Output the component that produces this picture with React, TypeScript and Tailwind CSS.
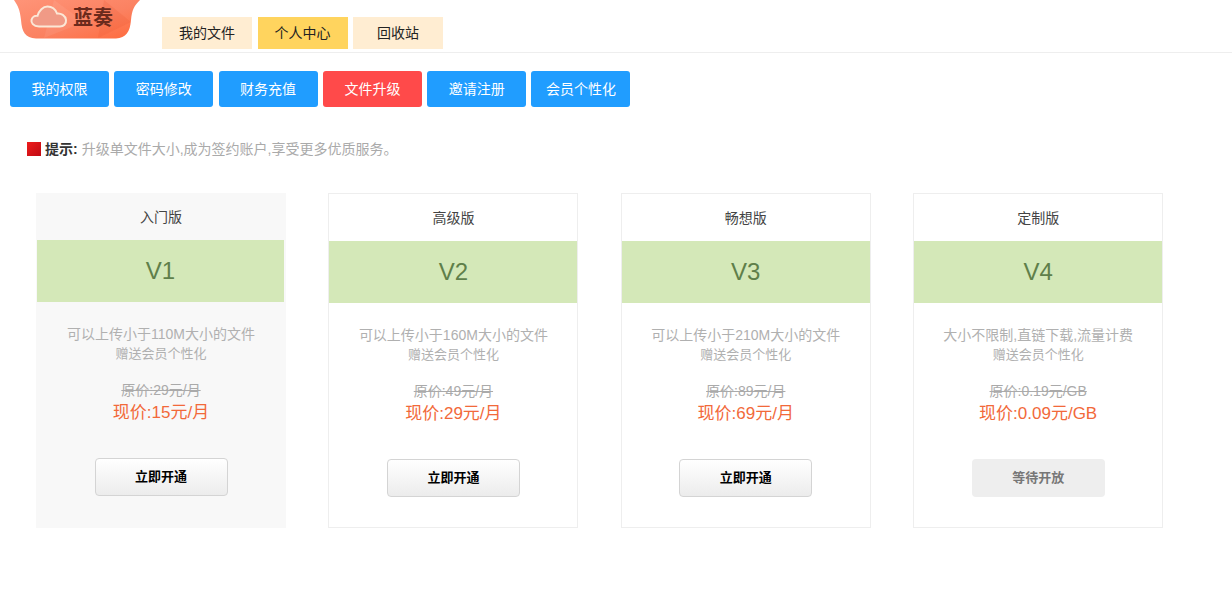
import React from 'react';

const FONT = 'font-["Liberation_Sans","Noto_Sans_CJK_SC",sans-serif]';

type Plan = {
  name: string;
  level: string;
  desc: string;
  oldPrice: string;
  price: string;
  action: string;
  active?: boolean;
  disabled?: boolean;
};

const tabs = [
  { label: '我的文件', active: false },
  { label: '个人中心', active: true },
  { label: '回收站', active: false },
];

const navItems = [
  { label: '我的权限', active: false },
  { label: '密码修改', active: false },
  { label: '财务充值', active: false },
  { label: '文件升级', active: true },
  { label: '邀请注册', active: false },
  { label: '会员个性化', active: false },
];

const plans: Plan[] = [
  { name: '入门版', level: 'V1', desc: '可以上传小于110M大小的文件', oldPrice: '原价:29元/月', price: '现价:15元/月', action: '立即开通', active: true },
  { name: '高级版', level: 'V2', desc: '可以上传小于160M大小的文件', oldPrice: '原价:49元/月', price: '现价:29元/月', action: '立即开通' },
  { name: '畅想版', level: 'V3', desc: '可以上传小于210M大小的文件', oldPrice: '原价:89元/月', price: '现价:69元/月', action: '立即开通' },
  { name: '定制版', level: 'V4', desc: '大小不限制,直链下载,流量计费', oldPrice: '原价:0.19元/GB', price: '现价:0.09元/GB', action: '等待开放', disabled: true },
];

const Logo = () => (
  <div className="relative ml-[14px] h-[39px] w-[126px] shrink-0">
    <svg className="absolute inset-0" width="126" height="39" viewBox="0 0 126 39">
      <defs>
        <linearGradient id="logoBg" x1="0" y1="0" x2="1" y2="1">
          <stop offset="0" stopColor="#ff9478" />
          <stop offset="0.55" stopColor="#fb8262" />
          <stop offset="1" stopColor="#ff6a3c" />
        </linearGradient>
      </defs>
      <path d="M0 0 H126 C120 6 118 10 117 20 C116 32 112 38 102 38.5 H22 C11 38 8 32 7 20 C6 10 4 6 0 0 Z" fill="url(#logoBg)" />
      <path d="M40 0 L70 22 L30 38 Z" fill="#ffffff" opacity="0.07" />
      <path d="M90 0 L117 22 L84 38 Z" fill="#e8522a" opacity="0.18" />
      <path
        d="M25 26.5 C19 26.5 17 22.5 17.5 20 C18 17.5 20.5 15.5 23.5 15.8 C25 10.5 29 6.5 33.5 6.5 C38 6.5 41.5 9.5 43 13.5 C47 13 51.5 15.5 52 20 C52.5 24 49.5 26.5 46 26.5 Z"
        fill="#f09a86"
        stroke="#fbe7d6"
        strokeWidth="2"
      />
    </svg>
    <span className="absolute left-[59px] top-[5px] text-[20px] leading-[26px] font-bold text-[#6b2a1c]">蓝奏</span>
  </div>
);

const PlanCard = ({ plan }: { plan: Plan }) => (
  <div
    className={`flex h-[335px] w-[250px] shrink-0 flex-col items-center ${
      plan.active ? 'bg-[#f8f8f8]' : 'border border-[#eeeeee] bg-white'
    }`}
  >
    <div className={`flex h-[47px] items-center justify-center text-sm text-[#444444] ${plan.active ? 'pt-[1px]' : ''}`}>
      {plan.name}
    </div>
    <div
      className={`flex h-[62px] items-center justify-center bg-[#d4e8b8] text-[24px] text-[#5f7f4a] ${
        plan.active ? 'ml-[1px] w-[247px] self-start' : 'w-full'
      }`}
    >
      {plan.level}
    </div>
    <div className="mt-[23px] text-center text-sm leading-[19px] text-[#b0b0b0]">{plan.desc}</div>
    <div className="text-center text-[13px] leading-[19px] text-[#b0b0b0]">赠送会员个性化</div>
    <div className="mt-[18px] text-sm leading-[19px] text-[#aaaaaa] line-through">{plan.oldPrice}</div>
    <div className="mt-[1px] text-[17px] leading-[24px] text-[#f2693a]">{plan.price}</div>
    <button
      className={`mt-[33px] h-[38px] w-[133px] rounded-[4px] text-[13px] font-bold ${
        plan.disabled
          ? 'bg-[#eeeeee] text-[#777777]'
          : 'border border-[#d4d4d4] bg-gradient-to-b from-white to-[#ececec] text-black'
      }`}
    >
      {plan.action}
    </button>
  </div>
);

export default function App() {
  return (
    <div className={`${FONT} h-[603px] w-[1232px] overflow-hidden bg-white`}>
      <header className="flex h-[53px] border-b border-[#eeeeee]">
        <Logo />
        <div className="ml-[22px] mt-[17px] flex gap-[5.5px]">
          {tabs.map((tab) => (
            <div
              key={tab.label}
              className={`flex h-[32px] w-[90px] items-center justify-center text-sm text-[#222222] ${
                tab.active ? 'bg-[#ffd45e]' : 'bg-[#ffedd2]'
              }`}
            >
              {tab.label}
            </div>
          ))}
        </div>
      </header>

      <nav className="ml-[10px] mt-[18px] flex gap-[5.3px]">
        {navItems.map((item) => (
          <div
            key={item.label}
            className={`flex h-[36px] w-[99px] items-center justify-center rounded-[3px] text-sm text-white ${
              item.active ? 'bg-[#ff4a4a]' : 'bg-[#209dff]'
            }`}
          >
            {item.label}
          </div>
        ))}
      </nav>

      <div className="ml-[27px] mt-[32px] flex h-[19px] items-center text-sm">
        <span className="h-[14px] w-[14px] bg-gradient-to-br from-[#ee1c1c] to-[#c00a14]" />
        <span className="ml-[4px] font-bold text-[#333333]">提示:</span>
        <span className="ml-[4px] text-[#aaaaaa]">升级单文件大小,成为签约账户,享受更多优质服务。</span>
      </div>

      <div className="ml-[36px] mt-[35px] flex gap-[42.4px]">
        {plans.map((plan) => (
          <PlanCard key={plan.level} plan={plan} />
        ))}
      </div>
    </div>
  );
}
